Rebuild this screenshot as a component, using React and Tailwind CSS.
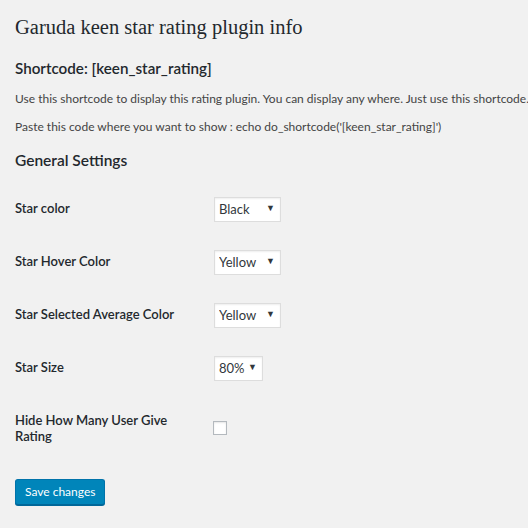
import React, { useState } from 'react';

const sans = { fontFamily: 'Lato, "Noto Sans", sans-serif' };

function Select({ value, options, width }) {
  const [val, setVal] = useState(value);
  return (
    <div className={`relative ${width}`}>
      <select
        value={val}
        onChange={(e) => setVal(e.target.value)}
        className="w-full h-[25px] appearance-none bg-white border border-[#dddddd] shadow-[inset_0_1px_2px_rgba(0,0,0,0.07)] pl-[4px] pr-[16px] text-[13px] text-[#32373c] leading-[23px] outline-none"
      >
        {options.map((o) => (
          <option key={o}>{o}</option>
        ))}
      </select>
      <span className="pointer-events-none absolute right-[6px] top-[5px] text-[9px] text-[#32373c]">▼</span>
    </div>
  );
}

const rows = [
  { label: 'Star color', value: 'Black', options: ['Black', 'Yellow', 'Red'], width: 'w-[67px]' },
  { label: 'Star Hover Color', value: 'Yellow', options: ['Black', 'Yellow', 'Red'], width: 'w-[67px]' },
  { label: 'Star Selected Average Color', value: 'Yellow', options: ['Black', 'Yellow', 'Red'], width: 'w-[67px]' },
  { label: 'Star Size', value: '80%', options: ['60%', '80%', '100%'], width: 'w-[49px]' },
];

export default function App() {
  const [hide, setHide] = useState(false);

  return (
    <div className="min-h-[528px] bg-[#f1f1f1] px-[15px] pt-[14px] text-[#444444]" style={sans}>
      <h1 className="text-[20.5px] leading-[27px] text-[#23282d]" style={{ fontFamily: '"Liberation Serif", serif' }}>
        Garuda keen star rating plugin info
      </h1>
      <h2 className="mt-[17px] text-[15.2px] leading-[20px] font-semibold text-[#23282d]">Shortcode: [keen_star_rating]</h2>
      <p className="mt-[12px] text-[12px] leading-[18px] whitespace-nowrap">
        Use this shortcode to display this rating plugin. You can display any where. Just use this shortcode.
      </p>
      <p className="mt-[10px] text-[12px] leading-[18px] whitespace-nowrap">
        Paste this code where you want to show : echo do_shortcode('[keen_star_rating]')
      </p>
      <h2 className="mt-[13px] text-[15.5px] leading-[22px] font-semibold text-[#23282d]">General Settings</h2>

      <div className="mt-[11px] flex flex-col">
        {rows.map((r) => (
          <div key={r.label} className="flex items-center h-[53px]">
            <div className="w-[199px] text-[13px] font-semibold text-[#23282d]">{r.label}</div>
            <Select value={r.value} options={r.options} width={r.width} />
          </div>
        ))}
        <div className="flex items-center h-[68px]">
          <div className="w-[199px] pr-[20px] text-[13px] leading-[16px] font-semibold text-[#23282d]">
            Hide How Many User Give Rating
          </div>
          <input
            type="checkbox"
            checked={hide}
            onChange={() => setHide(!hide)}
            className="ml-[-1px] h-[14px] w-[14px] appearance-none bg-white border border-[#b4b9be] shadow-[inset_0_1px_2px_rgba(0,0,0,0.1)]"
          />
        </div>
      </div>

      <button className="mt-[17px] h-[26px] px-[9px] rounded-[3px] bg-[#0085ba] border border-[#0073aa] border-b-[#006799] shadow-[0_1px_0_#006799] text-[12px] text-white">
        Save changes
      </button>
    </div>
  );
}
